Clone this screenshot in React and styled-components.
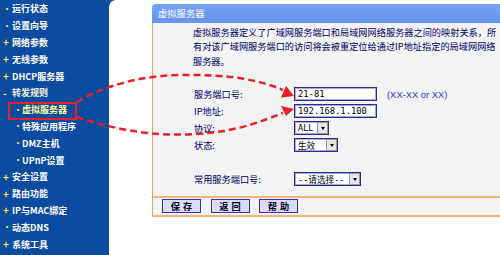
import React from "react";
import styled, { createGlobalStyle } from "styled-components";

const GlobalStyle = createGlobalStyle`
  html, body {
    margin: 0;
    padding: 0;
    background: #ffffff;
    overflow: hidden;
  }
`;

const CJK = `"Noto Sans CJK SC", "Noto Sans", sans-serif`;

const Page = styled.div`
  position: relative;
  display: flex;
  width: 500px;
  height: 255px;
  background: #0b4ba0;
  font-family: ${CJK};
`;

const Sidebar = styled.div`
  width: 109px;
  padding-top: 0.5px;
  display: flex;
  flex-direction: column;
`;

const MenuItem = styled.div`
  display: flex;
  align-items: center;
  height: 16.8px;
  padding-left: ${(p) => (p.$sub ? "14px" : "3px")};
  font-size: 9px;
  font-weight: 700;
  color: ${(p) => p.$tone || "#ffffff"};
  white-space: nowrap;
`;

const Bullet = styled.span`
  width: ${(p) => (p.$sub ? "8px" : "9px")};
  color: #ffe84a;
  font-size: ${(p) => (p.$glyph === "•" ? "8px" : "10px")};
  line-height: 1;
`;

const Content = styled.div`
  flex: 1;
  background: #ffffff;
  border-top-left-radius: 7px;
  padding: 3.5px 0 0 43px;
`;

const Panel = styled.div`
  display: flex;
  flex-direction: column;
`;

const PanelTitle = styled.div`
  height: 19px;
  line-height: 19px;
  padding-left: 6px;
  background: linear-gradient(#77a3f5, #6694ee);
  border-top-left-radius: 4px;
  color: #ffffff;
  font-size: 9.3px;
`;

const PanelBody = styled.div`
  background: #f3f3f3;
  border-left: 1px solid #f0a050;
  color: #000066;
  font-size: 9.2px;
`;

const Intro = styled.div`
  padding: 2px 0 0 40px;
  line-height: 14.5px;
  white-space: nowrap;
`;

const Form = styled.div`
  display: grid;
  grid-template-columns: 100px auto;
  grid-auto-rows: 17px;
  align-items: center;
  justify-items: start;
  margin-top: 17.5px;
  padding: 0 0 8px 41px;
`;

const Label = styled.div`
  white-space: nowrap;
`;

const Field = styled.div`
  display: flex;
  align-items: center;
`;

const TextBox = styled.div`
  box-sizing: border-box;
  width: 83px;
  height: 14px;
  padding-left: 3px;
  background: #ffffff;
  border: 1px solid #2b2b8f;
  box-shadow: inset 0 0 0 1px #a8a8dc;
  font-family: "DejaVu Sans Mono", "Liberation Mono", monospace;
  font-size: 8.8px;
  line-height: 12px;
  color: #000000;
`;

const Hint = styled.span`
  margin-left: 10px;
  color: #3535c8;
  font-family: "Liberation Sans", sans-serif;
  font-size: 9.4px;
`;

const SelectBox = styled.div`
  box-sizing: border-box;
  display: flex;
  align-items: center;
  justify-content: space-between;
  width: ${(p) => p.$w}px;
  height: 14px;
  padding-left: 3px;
  background: #ffffff;
  border: 1px solid #2b2b8f;
  box-shadow: inset 0 0 0 1px #a8a8dc;
  color: #000000;
  font-size: 9.2px;
  white-space: nowrap;
`;

const SelectText = styled.span`
  font-family: "DejaVu Sans Mono", "Noto Sans CJK SC", monospace;
  font-size: 8.6px;
`;

const SelectArrow = styled.span`
  box-sizing: border-box;
  width: 11px;
  height: 12px;
  display: flex;
  align-items: center;
  justify-content: center;
  background: #e6e6e6;
  border: 1px solid #9a9a9a;
  &::after {
    content: "";
    border-left: 2.5px solid transparent;
    border-right: 2.5px solid transparent;
    border-top: 3px solid #000000;
  }
`;

const ButtonBar = styled.div`
  display: flex;
  gap: 9.5px;
  padding: 1px 0 2px 9px;
  border-top: 2px solid #f5b27a;
  border-bottom: 2px solid #f5b27a;
`;

const Button = styled.div`
  box-sizing: border-box;
  width: 39px;
  height: 14px;
  display: flex;
  align-items: center;
  justify-content: center;
  background: #dcdcf2;
  border: 1px solid #34349c;
  color: #000033;
  font-size: 9.2px;
  font-weight: 700;
  letter-spacing: 3px;
  padding-left: 3px;
`;

const Annotation = styled.svg`
  position: absolute;
  left: 0;
  top: 0;
  pointer-events: none;
`;

const menu = [
  { label: "运行状态", glyph: "•" },
  { label: "设置向导", glyph: "•" },
  { label: "网络参数", glyph: "+" },
  { label: "无线参数", glyph: "+" },
  { label: "DHCP服务器", glyph: "+" },
  { label: "转发规则", glyph: "-", tone: "#f4f4d8" },
  { label: "虚拟服务器", glyph: "•", sub: true, tone: "#ffff9c" },
  { label: "特殊应用程序", glyph: "•", sub: true },
  { label: "DMZ主机", glyph: "•", sub: true },
  { label: "UPnP设置", glyph: "•", sub: true },
  { label: "安全设置", glyph: "+" },
  { label: "路由功能", glyph: "+" },
  { label: "IP与MAC绑定", glyph: "+" },
  { label: "动态DNS", glyph: "•" },
  { label: "系统工具", glyph: "+" },
];

const Select = ({ width, value }) => (
  <SelectBox $w={width}>
    <SelectText>{value}</SelectText>
    <SelectArrow />
  </SelectBox>
);

const App = () => {
  return (
    <Page>
      <GlobalStyle />
      <Sidebar>
        {menu.map((item) => (
          <MenuItem key={item.label} $sub={item.sub} $tone={item.tone}>
            <Bullet $sub={item.sub} $glyph={item.glyph}>
              {item.glyph}
            </Bullet>
            {item.label}
          </MenuItem>
        ))}
      </Sidebar>
      <Content>
        <Panel>
          <PanelTitle>虚拟服务器</PanelTitle>
          <PanelBody>
            <Intro>
              虚拟服务器定义了广域网服务端口和局域网网络服务器之间的映射关系，所
              <br />
              有对该广域网服务端口的访问将会被重定位给通过IP地址指定的局域网网络
              <br />
              服务器。
            </Intro>
            <Form>
              <Label>服务端口号:</Label>
              <Field>
                <TextBox>21-81</TextBox>
                <Hint>(XX-XX or XX)</Hint>
              </Field>
              <Label>IP地址:</Label>
              <Field>
                <TextBox>192.168.1.100</TextBox>
              </Field>
              <Label>协议:</Label>
              <Select width={35} value="ALL" />
              <Label>状态:</Label>
              <Select width={44} value="生效" />
              <Label />
              <Field />
              <Label>常用服务端口号:</Label>
              <Select width={67} value="--请选择--" />
            </Form>
            <ButtonBar>
              <Button>保存</Button>
              <Button>返回</Button>
              <Button>帮助</Button>
            </ButtonBar>
          </PanelBody>
        </Panel>
      </Content>

      {/* red call-out drawn over the page */}
      <Annotation width="500" height="255" viewBox="0 0 500 255">
        <rect x="9" y="103" width="67" height="16" fill="none" stroke="#e8202a" strokeWidth="2" />
        <g fill="none" stroke="#e8202a" strokeWidth="2.5" strokeDasharray="7 4">
          <path d="M77 102 C 100 88, 135 76, 180 75 C 228 74, 260 80, 283 90" />
          <path d="M77 117 C 110 128, 150 137, 195 134 C 235 132, 260 122, 283 113" />
        </g>
        <polygon points="294,96 281,97.5 286,86" fill="#e8202a" />
        <polygon points="294,109 286,116 281,106" fill="#e8202a" />
      </Annotation>
    </Page>
  );
};

export default App;
